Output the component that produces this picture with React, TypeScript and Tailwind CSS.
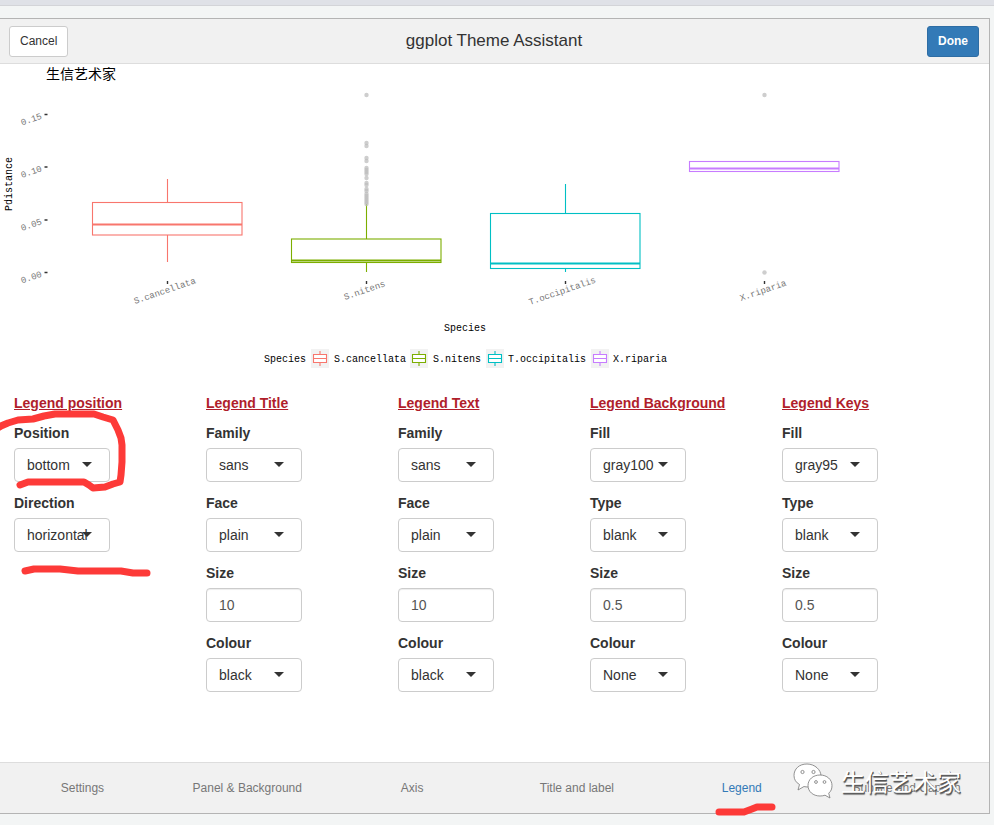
import { useState } from "react";

const tabs = [
  "Settings",
  "Panel & Background",
  "Axis",
  "Title and label",
  "Legend",
  "Subtitle and Caption",
];

type Field = {
  label: string;
  value: string;
  options?: string[];
};

const columns: { title: string; fields: Field[] }[] = [
  {
    title: "Legend position",
    fields: [
      {
        label: "Position",
        value: "bottom",
        options: ["bottom", "top", "left", "right", "none"],
      },
      {
        label: "Direction",
        value: "horizontal",
        options: ["horizontal", "vertical"],
      },
    ],
  },
  {
    title: "Legend Title",
    fields: [
      { label: "Family", value: "sans", options: ["sans", "serif", "mono"] },
      { label: "Face", value: "plain", options: ["plain", "bold", "italic"] },
      { label: "Size", value: "10" },
      { label: "Colour", value: "black", options: ["black", "white", "None"] },
    ],
  },
  {
    title: "Legend Text",
    fields: [
      { label: "Family", value: "sans", options: ["sans", "serif", "mono"] },
      { label: "Face", value: "plain", options: ["plain", "bold", "italic"] },
      { label: "Size", value: "10" },
      { label: "Colour", value: "black", options: ["black", "white", "None"] },
    ],
  },
  {
    title: "Legend Background",
    fields: [
      { label: "Fill", value: "gray100", options: ["gray100", "None"] },
      { label: "Type", value: "blank", options: ["blank", "solid", "dashed"] },
      { label: "Size", value: "0.5" },
      { label: "Colour", value: "None", options: ["None", "black"] },
    ],
  },
  {
    title: "Legend Keys",
    fields: [
      { label: "Fill", value: "gray95", options: ["gray95", "None"] },
      { label: "Type", value: "blank", options: ["blank", "solid", "dashed"] },
      { label: "Size", value: "0.5" },
      { label: "Colour", value: "None", options: ["None", "black"] },
    ],
  },
];

// y values are measured from the top of the plot area
const boxes = [
  { name: "S.cancellata", color: "#F8766D", x: 167.5, max: 115, q3: 138.5, med: 160.5, q1: 171, min: 198, keyX: 312, textX: 334, labelX: 135, labelY: 240, points: [] },
  {
    name: "S.nitens", color: "#7CAE00", x: 366.5, max: 140, q3: 175, med: 196.5, q1: 198.5, min: 208, keyX: 411, textX: 433, labelX: 345, labelY: 236,
    points: [31, 79, 82, 94, 97, 104, 106, 108, 110, 114, 119, 121, 125, 127, 130, 132, 134, 136, 138, 140],
  },
  { name: "T.occipitalis", color: "#00BFC4", x: 565.5, max: 120, q3: 149.5, med: 199.5, q1: 204.5, min: 208, keyX: 487, textX: 508, labelX: 530, labelY: 241, points: [] },
  { name: "X.riparia", color: "#C77CFF", x: 764.5, max: 97, q3: 97.5, med: 104.5, q1: 107.5, min: 107, keyX: 592, textX: 613, labelX: 741, labelY: 237, points: [31, 208.5] },
];

const yTicks = [
  { label: "0.15", y: 50.5 },
  { label: "0.10", y: 103 },
  { label: "0.05", y: 156 },
  { label: "0.00", y: 208.5 },
];

function BoxPlot() {
  return (
    <svg
      viewBox="0 0 989 320"
      className="block w-full"
      role="img"
      aria-label="Box plot of Pdistance by Species"
      fontFamily="'Liberation Mono', 'Noto Sans CJK SC', monospace"
      fontSize="10">
      <text x="46" y="15" fontSize="14" fontFamily="'Noto Sans CJK SC', sans-serif">
        生信艺术家
      </text>
      <text transform="translate(12 147) rotate(-90)">Pdistance</text>
      {yTicks.map((t) => (
        <g key={t.label}>
          <path d={`M44.5 ${t.y}h3`} stroke="#333" strokeWidth="1.5" />
          <text transform={`translate(22 ${t.y + 11}) rotate(-19)`} fontSize="9" fill="#777">
            {t.label}
          </text>
        </g>
      ))}
      {boxes.map((b) => (
        <g key={b.name} stroke={b.color} fill="none">
          <path d={`M${b.x} ${b.max}V${b.q3}M${b.x} ${b.q1}V${b.min}`} strokeWidth="1.1" />
          <rect x={b.x - 75} y={b.q3} width="149.5" height={b.q1 - b.q3} fill="#fff" strokeWidth="1.1" />
          <path d={`M${b.x - 75} ${b.med}h149.5`} strokeWidth="1.9" />
          {b.points.map((y) => (
            <circle key={y} cx={b.x} cy={y} r="2.2" fill="#bebebe" fillOpacity="0.75" stroke="none" />
          ))}
          <path d={`M${b.x} 217v3`} stroke="#333" strokeWidth="1.4" />
          <text
            transform={`translate(${b.labelX} ${b.labelY}) rotate(-19)`}
            fontSize="9"
            fill="#777"
            stroke="none">
            {b.name}
          </text>
        </g>
      ))}
      <text x="444" y="267">Species</text>

      {/* Legend */}
      <text x="264" y="298">Species</text>
      {boxes.map((b) => (
        <g key={b.name}>
          <rect x={b.keyX - 1} y="285" width="18" height="19" fill="#f2f2f2" />
          <path d={`M${b.keyX + 8} 287v15`} stroke={b.color} strokeWidth="1.1" />
          <path
            d={`M${b.keyX + 1.5} 290.5h13v8h-13zM${b.keyX + 1.5} 294.5h13`}
            stroke={b.color}
            strokeWidth="1.1"
            fill="#fff"
          />
          <text x={b.textX} y="298">{b.name}</text>
        </g>
      ))}
    </svg>
  );
}

function FormField({ id, field }: { id: string; field: Field }) {
  return (
    <div className="flex flex-col items-start gap-[5px]">
      <label htmlFor={id} className="font-bold">
        {field.label}
      </label>
      {field.options ? (
        <div className="relative w-24">
          <select
            id={id}
            defaultValue={field.value}
            className="block h-[34px] w-full appearance-none rounded border border-[#ccc] bg-white pl-3 pr-2 text-sm text-[#333]">
            {field.options.map((o) => (
              <option key={o}>{o}</option>
            ))}
          </select>
          <svg
            viewBox="0 0 10 5"
            className="pointer-events-none absolute right-[18px] top-3.5 h-[5px] w-2.5"
            aria-hidden="true">
            <path d="M0 0h10L5 5z" fill="#333" />
          </svg>
        </div>
      ) : (
        <input
          id={id}
          type="text"
          defaultValue={field.value}
          className="block h-[34px] w-24 rounded border border-[#ccc] bg-white px-3 text-sm text-[#555] shadow-[inset_0_1px_1px_rgba(0,0,0,0.075)]"
        />
      )}
    </div>
  );
}

// Hand drawn marker strokes on top of the page
function Marker() {
  return (
    <svg
      className="pointer-events-none absolute left-0 top-0"
      width="800"
      height="825"
      fill="none"
      stroke="#fd3a38"
      strokeWidth="7"
      strokeLinecap="round"
      strokeLinejoin="round"
      aria-hidden="true">
      <path d="M-2 428L1 426L8 423L18 420L33 419L44 416L55 414H94L103 417L113 420L118 430L121 438L122 445V462L121 475L120 482L113 484L105 487L93 488L89 485L84 482H28L20 485" />
      <path d="M25 571L34 569H60L78 571H121L133 573H147" />
      <path d="M719 812H744L752 809L757 807H772" />
    </svg>
  );
}

function Watermark() {
  return (
    <div className="pointer-events-none absolute right-7 top-0 flex items-center gap-2">
      <svg width="40" height="36" viewBox="0 0 40 36" fill="#fff" stroke="#777" strokeWidth="0.8" aria-hidden="true">
        <path d="M14 1C6 1 1 6 1 12.500c0 4 2 7 5.500 9L5 27l6-3.500c1 .3 3 .5 5 .5C23 24 28 19 28 13S22 1 14 1z" />
        <path d="M27 12c-7 0-12 4.500-12 10.500S20 33 27 33c2 0 3.500-.3 5-.8l5 2.800-1.300-4.800C38 28.300 39 26 39 22.500 39 16.500 34 12 27 12z" />
        <circle cx="9.500" cy="9" r="1.600" />
        <circle cx="20.500" cy="9" r="1.600" />
        <circle cx="23" cy="19" r="1.400" />
        <circle cx="31.500" cy="19" r="1.400" />
      </svg>
      <span className="font-['Noto_Sans_CJK_SC',sans-serif] text-2xl font-normal leading-9 text-white [text-shadow:1px_1px_0_#555,1px_2px_1px_#777]">
        生信艺术家
      </span>
    </div>
  );
}

export default function App() {
  const [active, setActive] = useState("Legend");

  return (
    <div className="relative flex min-h-screen flex-col overflow-hidden bg-[#f3f5f5] pb-[11px] font-['Liberation_Sans',Arial,sans-serif] text-sm text-[#333]">
      <div className="h-1.5 border-b border-[#d3d4d8] bg-[#dfe1e7]" />

      <div className="mr-1 mt-3 flex flex-1 flex-col border border-l-0 border-[#b4b4b4] bg-white">
        <header className="flex h-[45px] items-center justify-between border-b border-[#ddd] bg-[#f1f1f1] pl-[9px] pr-2.5">
          <div className="flex flex-1">
            <button
              type="button"
              className="h-[31px] rounded-[3px] border border-[#ccc] bg-white px-2.5 text-xs text-[#333]">
              Cancel
            </button>
          </div>
          <h1 className="text-[17px]">ggplot Theme Assistant</h1>
          <div className="flex flex-1 justify-end">
            <button
              type="button"
              className="h-[31px] rounded-[3px] border border-[#2e6da4] bg-[#337ab7] px-2.5 text-xs font-bold text-white">
              Done
            </button>
          </div>
        </header>

        <main className="flex-1">
          <BoxPlot />
          <form className="grid grid-cols-5 pl-3.5 pr-[15px] pt-[9px]">
            {columns.map((col, i) => (
              <section key={col.title} className="flex flex-col gap-[11px]">
                <h2 className="-mb-px font-bold text-[#b01e2b] underline">
                  {col.title}
                </h2>
                {col.fields.map((f) => (
                  <FormField key={f.label} id={`${f.label}-${i}`} field={f} />
                ))}
              </section>
            ))}
          </form>
        </main>

        <footer className="relative border-t border-[#ddd] bg-[#f1f1f1]">
          <nav className="grid h-[50px] grid-cols-6 items-center text-center text-xs">
            {tabs.map((tab) => (
              <a
                key={tab}
                href="#"
                onClick={() => setActive(tab)}
                className={tab === active ? "text-[#337ab7]" : "text-[#777]"}>
                {tab}
              </a>
            ))}
          </nav>
          <Watermark />
        </footer>
      </div>
      <Marker />
    </div>
  );
}
